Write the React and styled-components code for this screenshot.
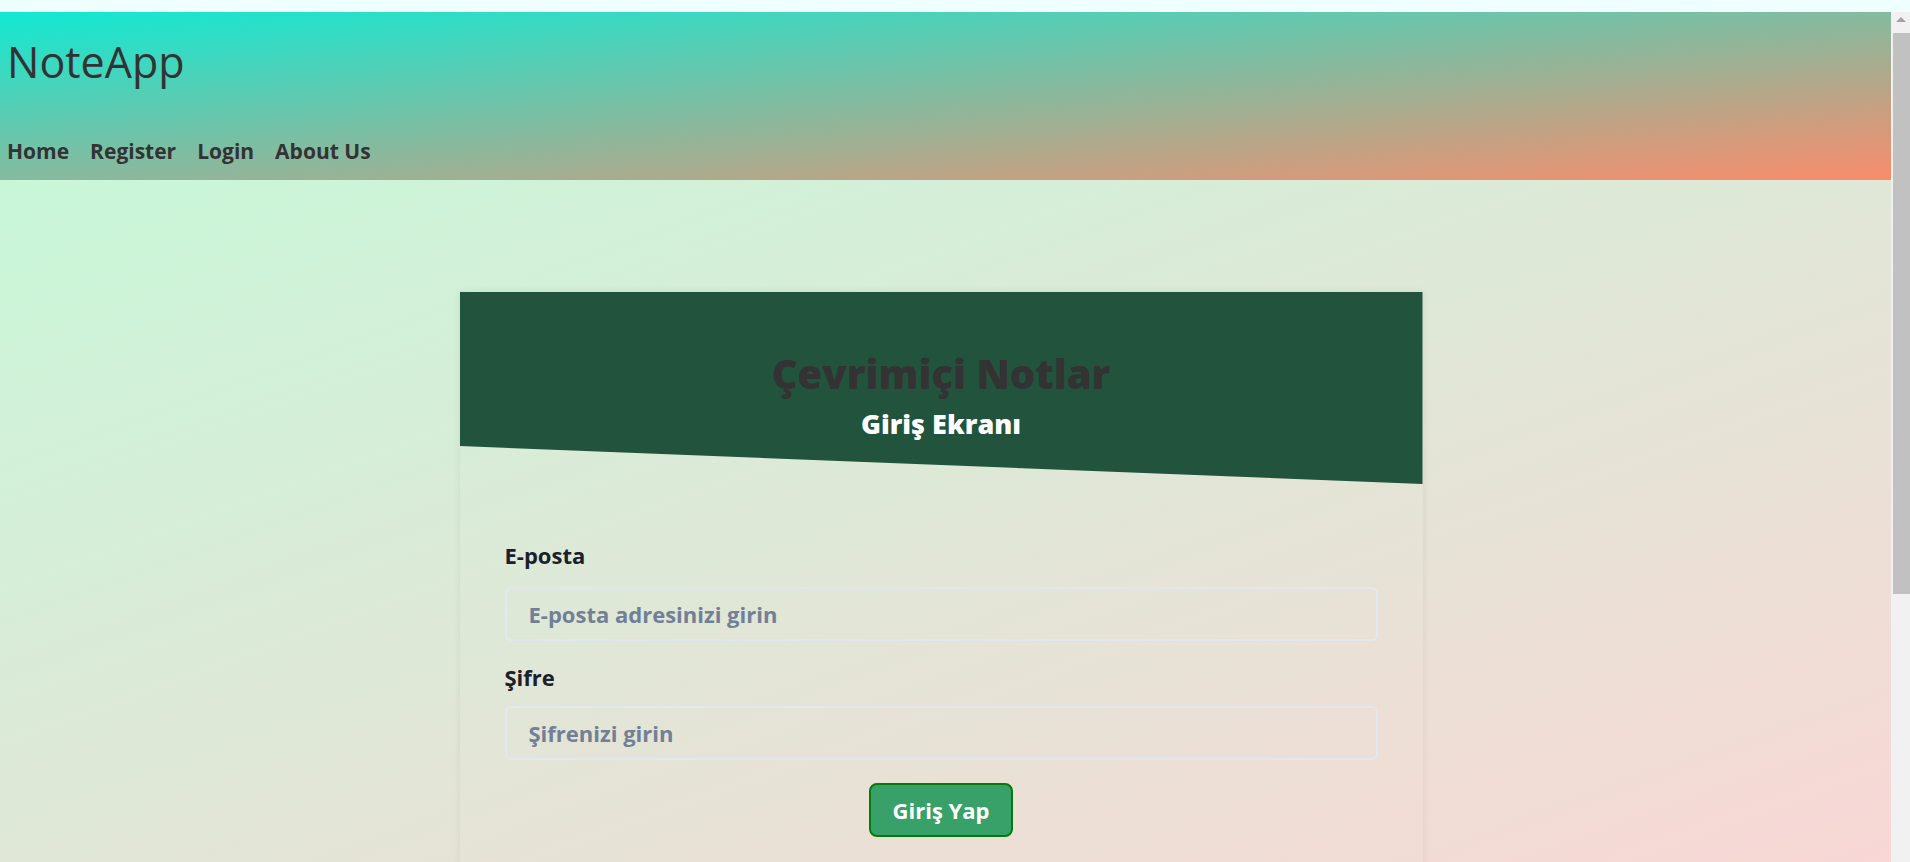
import React from "react";
import styled, { createGlobalStyle } from "styled-components";

const GlobalStyle = createGlobalStyle`
  html, body {
    margin: 0;
    padding: 0;
    height: 100%;
    overflow: hidden;
  }
  body {
    background: #effffd;
    font-family: "Open Sans", "Noto Sans", sans-serif;
  }
  #root {
    height: 100%;
  }
`;

const Frame = styled.div`
  height: 100vh;
  display: flex;
  flex-direction: column;
`;

const TopStrip = styled.div`
  height: 12px;
  flex: none;
  background: #effffd;
`;

const Viewport = styled.div`
  flex: 1;
  min-height: 0;
  display: flex;
`;

const Page = styled.div`
  flex: 1;
  min-width: 0;
  overflow: hidden;
`;

// stand-in for the browser's scrollbar seen on the right edge
const Rail = styled.div`
  width: 19px;
  flex: none;
  background: #f1f1f1;
  display: flex;
  flex-direction: column;
  align-items: flex-end;
`;

const RailArrow = styled.div`
  width: 19px;
  height: 19px;
  display: flex;
  align-items: center;
  justify-content: center;

  &::before {
    content: "";
    border-left: 5px solid transparent;
    border-right: 5px solid transparent;
    border-bottom: 5px solid #a3a3a3;
    margin-top: -4px;
  }
`;

const RailThumb = styled.div`
  width: 17px;
  height: 561px;
  margin-top: 2px;
  background: #c1c1c1;
`;

const Header = styled.header`
  height: 168px;
  box-sizing: border-box;
  padding: 28px 0 0 7px;
  display: flex;
  flex-direction: column;
  background: linear-gradient(to bottom right, #12e9d3, #f98c6b);
`;

const Brand = styled.div`
  font-size: 43px;
  font-weight: 400;
  line-height: 1;
  color: #333;
`;

const Nav = styled.nav`
  margin-top: 58px;
  display: flex;
  gap: 21px;
`;

const NavLink = styled.a`
  font-size: 21px;
  font-weight: 700;
  line-height: 1;
  color: #333;
  text-decoration: none;
  cursor: pointer;
`;

const Main = styled.main`
  min-height: 682px;
  box-sizing: border-box;
  padding-top: 112px;
  background-color: #f7d8d5;
  background-image: linear-gradient(to bottom right, #c8f7d8, #f8d7d5);
  background-size: 100% 682px;
  background-repeat: no-repeat;
`;

const Card = styled.section`
  width: 963px;
  margin: 0 0 0 calc(50% - 486px);
  padding-bottom: 60px;
  box-shadow: 0 0 7px rgba(0, 0, 0, 0.08);
`;

const CardHeader = styled.div`
  height: 192px;
  box-sizing: border-box;
  padding-top: 54px;
  display: flex;
  flex-direction: column;
  align-items: center;
  background: #22533d;
  clip-path: polygon(0 0, 100% 0, 100% 100%, 0 calc(100% - 38px));
`;

const Title = styled.h1`
  margin: 0;
  font-size: 40px;
  font-weight: 800;
  color: #333;
`;

const Subtitle = styled.h2`
  margin: 4px 0 0;
  font-size: 27px;
  font-weight: 800;
  color: #fff;
`;

const Form = styled.form`
  padding: 56px 45px 0;
  display: flex;
  flex-direction: column;
`;

const Label = styled.label`
  display: block;
  font-size: 22px;
  font-weight: 700;
  line-height: 30px;
  color: #1a202c;
  margin: ${(p) => (p.$first ? "0 0 17px" : "21px 0 14px")};
`;

const Input = styled.input`
  box-sizing: border-box;
  width: 100%;
  height: 54px;
  padding: 0 22px;
  border: 2px solid #e2e8f0;
  border-radius: 6px;
  background: transparent;
  font-family: inherit;
  font-size: 22px;
  font-weight: 700;
  color: #1a202c;
  outline: none;

  &::placeholder {
    color: #718096;
  }
`;

const SubmitButton = styled.button`
  margin: 23px auto 0;
  width: 144px;
  height: 54px;
  border: 2px solid #057b09;
  border-radius: 8px;
  background: #38a169;
  color: #fff;
  font-family: inherit;
  font-size: 22px;
  font-weight: 700;
  cursor: pointer;
`;

const App = () => {
  return (
    <>
      <GlobalStyle />
      <Frame>
        <TopStrip />
        <Viewport>
          <Page>
            <Header>
              <Brand>NoteApp</Brand>
              <Nav>
                <NavLink>Home</NavLink>
                <NavLink>Register</NavLink>
                <NavLink>Login</NavLink>
                <NavLink>About Us</NavLink>
              </Nav>
            </Header>
            <Main>
              <Card>
                <CardHeader>
                  <Title>Çevrimiçi Notlar</Title>
                  <Subtitle>Giriş Ekranı</Subtitle>
                </CardHeader>
                <Form onSubmit={(e) => e.preventDefault()}>
                  <Label $first htmlFor="email">
                    E-posta
                  </Label>
                  <Input id="email" type="email" placeholder="E-posta adresinizi girin" />
                  <Label htmlFor="password">Şifre</Label>
                  <Input id="password" type="password" placeholder="Şifrenizi girin" />
                  <SubmitButton type="submit">Giriş Yap</SubmitButton>
                </Form>
              </Card>
            </Main>
          </Page>
          <Rail>
            <RailArrow />
            <RailThumb />
          </Rail>
        </Viewport>
      </Frame>
    </>
  );
};

export default App;
